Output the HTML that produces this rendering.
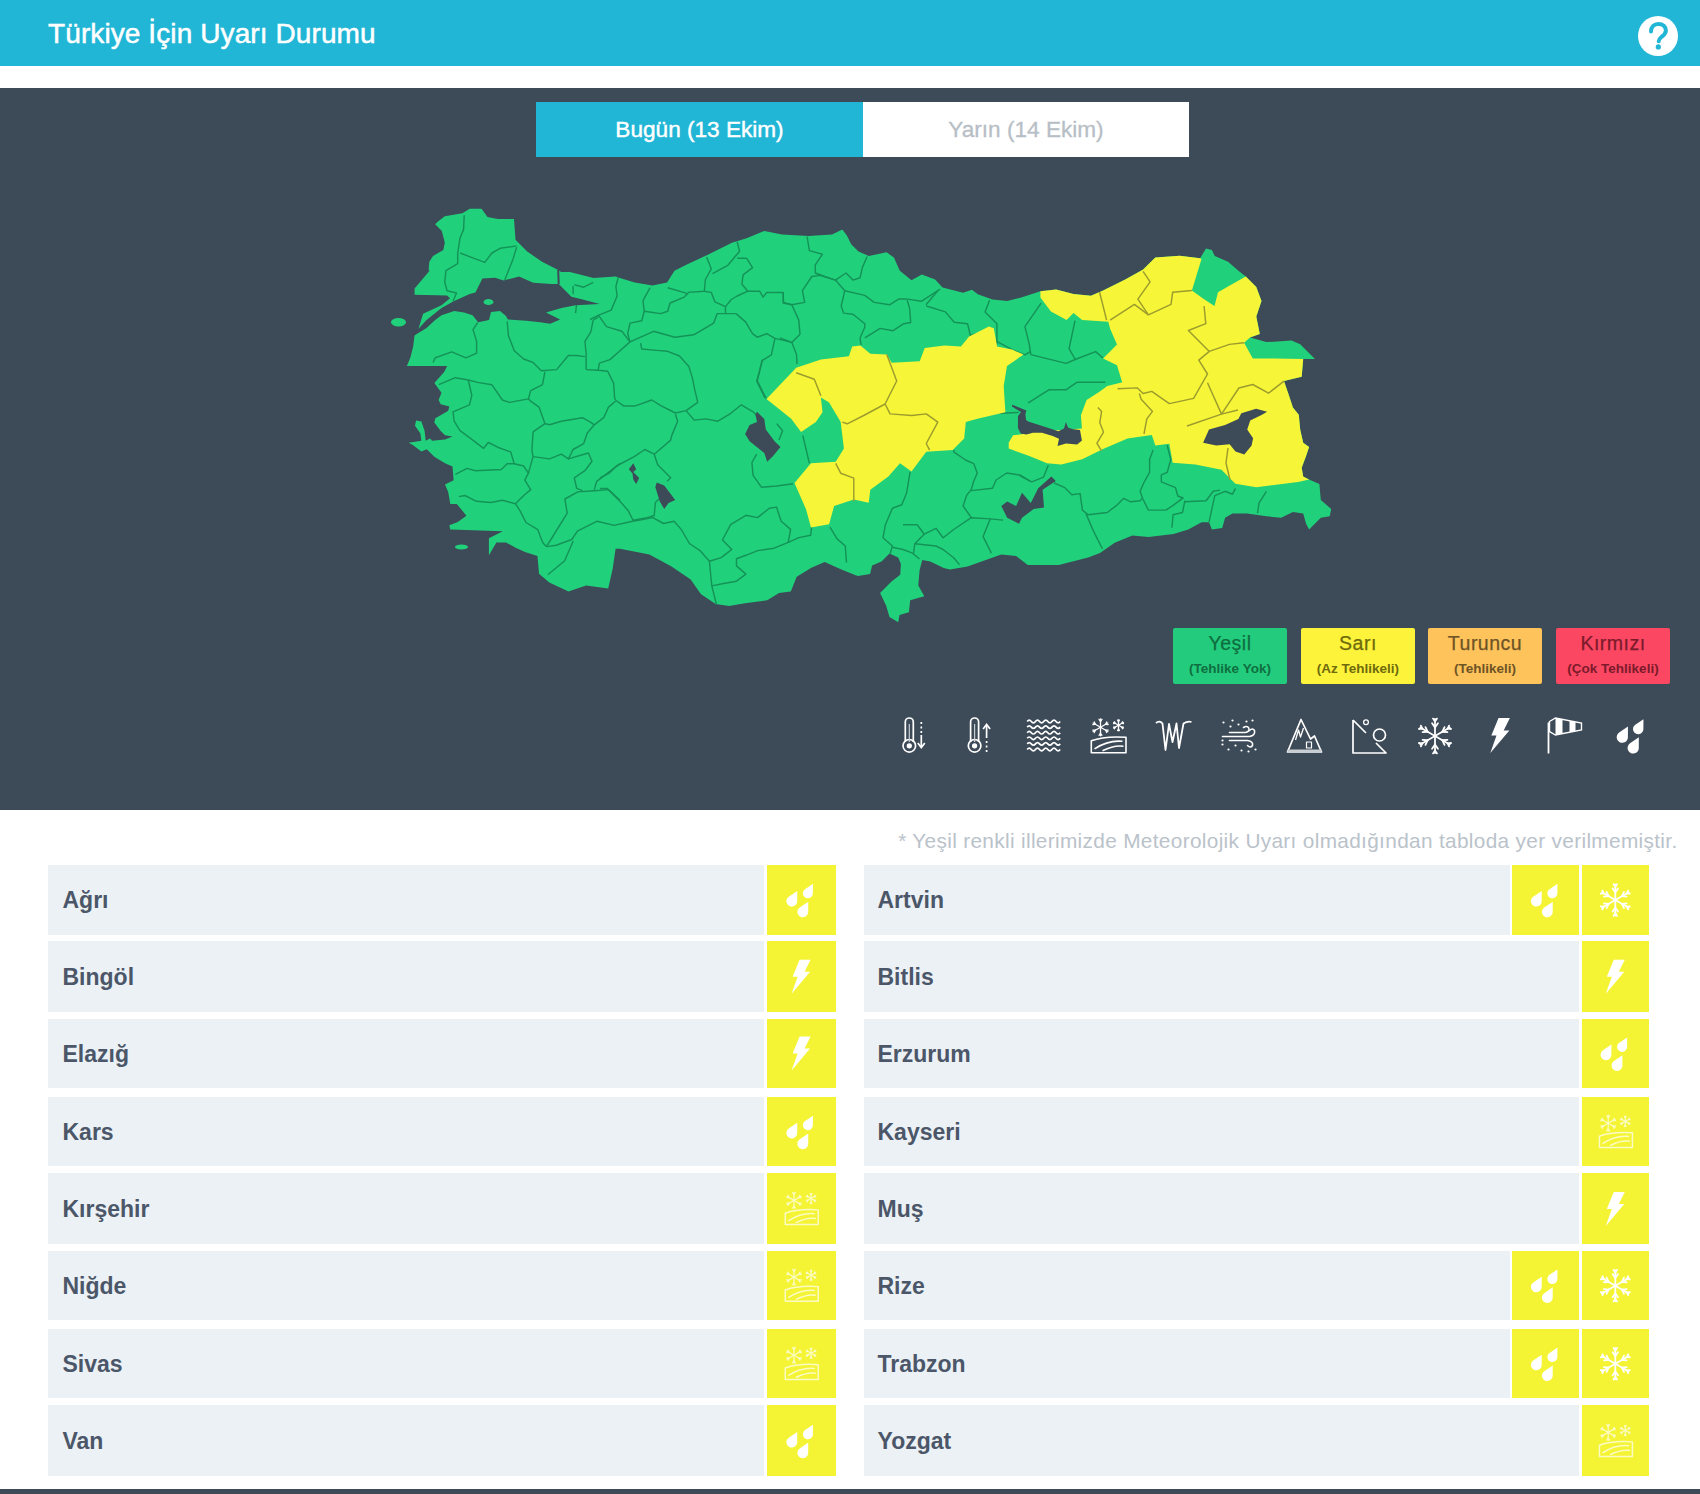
<!DOCTYPE html>
<html lang="tr">
<head>
<meta charset="utf-8">
<title>Türkiye İçin Uyarı Durumu</title>
<style>
html,body{margin:0;padding:0;}
body{width:1700px;height:1494px;position:relative;overflow:hidden;background:#fff;font-family:"Liberation Sans",sans-serif;}
.hdr{position:absolute;left:0;top:0;width:1700px;height:66.4px;background:#21b5d6;}
.hdr h1{position:absolute;left:48px;top:14px;margin:0;font-weight:normal;font-size:28px;line-height:40px;color:#fff;letter-spacing:0.1px;-webkit-text-stroke:0.5px #fff;}
.help{position:absolute;left:1638px;top:16px;width:40px;height:40px;border-radius:50%;background:#fff;}
.dark{position:absolute;left:0;top:88px;width:1700px;height:722px;background:#3d4a58;}
.tab{position:absolute;top:102px;height:55px;line-height:55px;text-align:center;font-size:22.6px;}
.tab1{left:536px;width:327px;background:#21b5d6;color:#fff;-webkit-text-stroke:0.45px #fff;}
.tab2{left:863px;width:326px;background:#fff;color:#b7bec6;-webkit-text-stroke:0.3px #b7bec6;}
.map{position:absolute;left:0;top:0;}
.leg{position:absolute;top:628px;width:114px;height:56px;border-radius:2px;text-align:center;}
.leg b{display:block;font-weight:normal;-webkit-text-stroke:0.25px currentColor;font-size:19.5px;line-height:20px;padding-top:5px;letter-spacing:0.5px;}
.leg i{display:block;font-style:normal;font-weight:bold;font-size:13.5px;line-height:16px;margin-top:7.5px;}
.ic{position:absolute;top:714px;width:44px;height:44px;}
.note{position:absolute;left:0;width:1677.5px;top:829px;text-align:right;font-size:20.8px;line-height:24px;color:#bac2ca;letter-spacing:0.33px;}
.row{position:absolute;background:#ebf1f5;}
.nm{position:absolute;font-weight:bold;font-size:23px;color:#4b5769;}
.yb{position:absolute;background:#f4f434;}
.foot{position:absolute;left:0;top:1489px;width:1700px;height:5px;background:#3d4a58;}
</style>
</head>
<body>
<div class="hdr"><h1>Türkiye İçin Uyarı Durumu</h1>
<div class="help"><svg width="40" height="40" viewBox="0 0 40 40"><path d="M13 15.6 C13 10.6 16.2 7.9 20.4 7.9 C24.8 7.9 27.9 10.6 27.9 14.6 C27.9 18 25.4 19.4 23.4 21 C21.6 22.5 20.7 23.6 20.7 25.2" fill="none" stroke="#21b5d6" stroke-width="4" stroke-linecap="round"/><circle cx="20.3" cy="30.9" r="2.6" fill="#21b5d6"/></svg></div>
</div>
<div class="dark"></div>
<div class="tab tab1">Bugün (13 Ekim)</div>
<div class="tab tab2">Yarın (14 Ekim)</div>
<svg class="map" width="1700" height="1494" viewBox="0 0 1700 1494" style="position:absolute;left:0;top:0">
<path d="M435.2 224.3 L437.4 222.1 L444.8 216.2 L462.4 213.3 L469.8 208.8 L481.6 208.8 L487.5 216.9 L497.8 219.1 L514.0 219.1 L515.5 239.8 L527.2 251.5 L542.0 261.8 L558.2 269.9 L561.1 272.1 L569.9 272.1 L593.5 278.0 L615.6 276.6 L620.0 278.0 L634.7 282.4 L652.4 285.4 L667.1 282.4 L674.5 270.7 L686.3 264.8 L708.3 254.5 L731.9 242.7 L746.6 238.3 L764.3 230.9 L782.0 234.6 L808.5 236.1 L832.0 234.6 L842.3 229.4 L846.7 235.3 L851.2 244.2 L858.5 251.5 L868.8 256.0 L886.5 252.3 L893.9 257.4 L899.8 270.7 L911.5 280.2 L921.8 274.4 L935.1 279.5 L942.5 287.6 L963.1 292.8 L971.9 289.8 L977.8 294.2 L992.5 299.4 L1007.2 300.9 L1022.0 297.2 L1040.4 291.3 L1056.1 289.6 L1073.5 294.0 L1090.9 295.7 L1103.1 290.5 L1125.7 279.2 L1143.1 269.6 L1155.3 257.4 L1179.7 255.7 L1200.1 258.2 L1206.0 248.6 L1211.9 250.1 L1214.8 256.0 L1228.1 261.8 L1238.4 270.7 L1245.8 276.6 L1256.3 287.0 L1261.5 300.9 L1256.3 316.6 L1259.8 334.0 L1250.0 337.5 L1266.4 342.1 L1291.4 340.6 L1300.2 344.3 L1315.0 359.0 L1303.2 359.0 L1301.7 376.7 L1284.0 381.1 L1289.4 396.7 L1292.9 407.4 L1298.8 414.7 L1300.2 429.4 L1303.2 442.7 L1309.1 447.1 L1306.1 456.0 L1301.7 467.7 L1303.2 476.6 L1309.1 479.5 L1319.4 483.9 L1320.8 500.1 L1331.2 509.0 L1329.7 516.3 L1320.8 517.8 L1309.1 529.6 L1306.1 523.7 L1303.2 513.4 L1292.9 511.9 L1281.1 517.8 L1266.4 516.3 L1247.2 513.4 L1232.5 513.4 L1225.1 517.8 L1222.2 528.1 L1211.9 529.6 L1209.0 522.2 L1201.6 522.2 L1188.3 529.6 L1173.6 534.0 L1148.6 536.9 L1132.4 535.5 L1114.7 542.8 L1100.0 553.1 L1088.2 557.5 L1058.8 564.9 L1027.8 564.9 L1016.1 556.1 L1001.3 554.6 L967.5 566.4 L950.0 569.5 L943.7 568.1 L930.3 561.4 L922.3 560.1 L919.6 570.1 L918.3 585.5 L924.3 596.2 L910.2 600.2 L908.9 612.3 L899.5 615.0 L898.2 622.3 L889.5 617.0 L886.1 605.6 L880.1 592.9 L891.5 581.5 L900.2 574.8 L900.9 564.1 L898.2 557.4 L889.5 553.4 L881.5 561.4 L872.1 565.4 L870.1 574.1 L858.0 576.1 L855.6 575.2 L840.8 569.3 L824.7 562.0 L811.4 567.8 L796.7 576.7 L790.8 591.4 L779.0 592.9 L767.2 600.2 L745.1 603.2 L729.0 606.1 L715.7 603.9 L701.0 594.3 L690.7 579.6 L671.5 566.4 L649.4 554.6 L620.0 548.7 L615.6 548.7 L612.6 569.3 L608.2 588.5 L586.1 585.5 L568.5 591.4 L549.3 582.6 L539.0 573.7 L537.5 556.1 L525.0 552.1 L515.7 547.8 L506.0 542.5 L496.4 542.5 L488.9 555.3 L488.9 538.2 L502.8 531.2 L450.3 529.6 L449.3 525.3 L457.8 522.1 L466.4 515.7 L456.8 503.9 L450.3 503.9 L448.2 492.1 L445.0 484.6 L453.6 480.3 L452.5 466.4 L445.0 463.2 L434.3 456.8 L426.8 449.3 L421.4 451.4 L412.8 445.0 L408.6 442.8 L421.4 440.7 L420.3 433.2 L415.0 425.7 L416.1 420.4 L421.4 421.4 L424.6 431.1 L425.7 440.7 L430.0 438.6 L432.1 440.7 L445.0 439.6 L452.5 436.4 L445.0 435.3 L440.7 431.1 L434.3 422.5 L435.3 418.2 L442.8 413.9 L448.2 410.7 L449.3 406.4 L440.7 404.3 L438.6 400.0 L441.5 392.8 L434.4 383.0 L444.3 371.7 L447.1 366.0 L406.9 366.0 L410.4 357.5 L413.2 346.2 L414.5 335.4 L418.5 328.7 L423.1 313.8 L441.5 305.3 L450.0 298.2 L447.1 295.4 L414.6 294.7 L414.6 288.4 L430.2 270.0 L428.6 270.7 L429.3 261.8 L433.0 255.9 L443.3 250.1 L444.8 242.7 L441.8 230.9 Z" fill="#21d07b"/>
<path d="M464.2 215.3 L463.6 229.4 L460.1 237.7 L457.7 253.0 L457.7 263.6 L445.9 270.7 L444.8 282.4 L447.1 290.7 L456.5 293.0 L453.0 301.3" fill="none" stroke="#149357" stroke-width="1.45" stroke-linejoin="round"/>
<path d="M460.1 253.0 L475.4 258.9 L484.8 262.4 L491.9 253.0 L500.1 248.3 L516.6 245.9" fill="none" stroke="#149357" stroke-width="1.45" stroke-linejoin="round"/>
<path d="M516.6 247.1 L513.1 258.9 L508.4 270.7 L504.8 280.1" fill="none" stroke="#149357" stroke-width="1.45" stroke-linejoin="round"/>
<path d="M574.3 284.8 L583.7 287.2 L593.2 282.4" fill="none" stroke="#149357" stroke-width="1.45" stroke-linejoin="round"/>
<path d="M573.1 286.0 L573.1 294.2" fill="none" stroke="#149357" stroke-width="1.45" stroke-linejoin="round"/>
<path d="M576.7 303.7 L575.5 313.1" fill="none" stroke="#149357" stroke-width="1.45" stroke-linejoin="round"/>
<path d="M477.7 322.5 L473.0 329.6 L476.6 341.3 L476.6 353.1 L466.0 357.8 L451.8 351.9 L435.3 357.8 L433.0 362.5" fill="none" stroke="#149357" stroke-width="1.45" stroke-linejoin="round"/>
<path d="M507.2 321.3 L508.4 335.5 L514.3 350.8 L523.7 359.0 L533.1 362.5 L541.3 370.8 L556.6 369.6 L568.4 355.5 L576.7 355.5 L584.9 356.6" fill="none" stroke="#149357" stroke-width="1.45" stroke-linejoin="round"/>
<path d="M593.2 320.1 L590.8 331.9 L584.9 341.3 L586.1 353.1 L586.1 369.6" fill="none" stroke="#149357" stroke-width="1.45" stroke-linejoin="round"/>
<path d="M618.3 277.1 L615.9 286.5 L617.1 296.0 L611.2 310.1 L599.4 314.8 L590.0 319.5" fill="none" stroke="#149357" stroke-width="1.45" stroke-linejoin="round"/>
<path d="M650.1 287.7 L643.0 300.7 L644.2 311.3 L641.8 320.7 L630.0 323.1 L627.7 333.7 L630.0 341.9" fill="none" stroke="#149357" stroke-width="1.45" stroke-linejoin="round"/>
<path d="M644.2 311.3 L660.7 313.6 L667.7 311.3 L670.1 303.0 L684.2 297.1 L687.8 293.6 L667.7 287.7" fill="none" stroke="#149357" stroke-width="1.45" stroke-linejoin="round"/>
<path d="M687.8 292.4 L704.3 291.2 L705.4 279.5 L711.3 268.9 L706.6 257.1" fill="none" stroke="#149357" stroke-width="1.45" stroke-linejoin="round"/>
<path d="M712.5 273.6 L727.8 265.3 L733.7 258.3 L739.6 251.2 L737.2 241.8" fill="none" stroke="#149357" stroke-width="1.45" stroke-linejoin="round"/>
<path d="M737.2 258.3 L746.7 258.3 L752.5 267.7 L743.1 274.8 L741.9 284.2 L747.8 291.2 L737.2 296.0 L731.3 299.5 L725.5 306.6" fill="none" stroke="#149357" stroke-width="1.45" stroke-linejoin="round"/>
<path d="M704.3 291.2 L711.3 292.4 L714.9 301.8 L725.5 306.6 L725.5 313.6" fill="none" stroke="#149357" stroke-width="1.45" stroke-linejoin="round"/>
<path d="M630.0 341.9 L653.6 331.3 L674.8 337.2 L693.7 334.8 L713.7 323.1 L717.2 313.6 L725.5 313.6 L736.0 313.6" fill="none" stroke="#149357" stroke-width="1.45" stroke-linejoin="round"/>
<path d="M736.0 313.6 L745.5 321.9 L752.5 333.7 L757.3 337.2 L766.7 333.7 L774.9 338.4 L790.0 341.9" fill="none" stroke="#149357" stroke-width="1.45" stroke-linejoin="round"/>
<path d="M747.8 291.2 L759.6 291.2 L763.1 297.1 L766.7 292.4 L783.2 292.4 L783.2 303.0 L791.8 304.8" fill="none" stroke="#149357" stroke-width="1.45" stroke-linejoin="round"/>
<path d="M774.9 338.4 L771.4 354.9 L762.0 360.7 L757.3 380.8 L764.3 394.9 L766.5 399.0" fill="none" stroke="#149357" stroke-width="1.45" stroke-linejoin="round"/>
<path d="M640.6 343.1 L641.8 349.0 L653.6 350.1 L667.7 351.3 L679.5 356.0 L688.9 366.6 L692.5 378.4 L694.8 390.2 L697.8 402.4" fill="none" stroke="#149357" stroke-width="1.45" stroke-linejoin="round"/>
<path d="M630.0 341.9 L619.4 351.3 L610.0 359.6 L599.4 363.1 L598.2 370.2 L607.7 371.3 L613.6 383.1 L614.7 398.4 L615.5 400.0" fill="none" stroke="#149357" stroke-width="1.45" stroke-linejoin="round"/>
<path d="M586.1 369.6 L598.2 370.2" fill="none" stroke="#149357" stroke-width="1.45" stroke-linejoin="round"/>
<path d="M598.2 314.8 L606.5 326.6 L621.8 331.3 L630.0 341.9" fill="none" stroke="#149357" stroke-width="1.45" stroke-linejoin="round"/>
<path d="M593.2 320.1 L598.2 317.2" fill="none" stroke="#149357" stroke-width="1.45" stroke-linejoin="round"/>
<path d="M807.1 236.5 L809.4 250.6 L822.4 254.2 L815.3 264.8 L815.3 273.0 L824.8 276.5 L835.4 280.1 L846.0 273.0 L853.0 280.1 L860.1 277.7 L862.5 267.1 L867.2 256.5" fill="none" stroke="#149357" stroke-width="1.45" stroke-linejoin="round"/>
<path d="M835.4 280.1 L844.8 290.7 L864.8 295.4 L874.2 302.4 L889.5 304.8 L899.0 298.9 L906.0 298.9 L921.3 301.3 L937.8 290.7 L940.2 289.0" fill="none" stroke="#149357" stroke-width="1.45" stroke-linejoin="round"/>
<path d="M783.2 292.4 L783.5 302.4 L791.8 304.8 L804.7 302.4 L802.4 290.7 L811.8 276.5 L820.0 275.4 L835.4 280.1" fill="none" stroke="#149357" stroke-width="1.45" stroke-linejoin="round"/>
<path d="M791.8 304.8 L798.8 320.1 L800.0 334.3 L791.8 342.5 L780.0 337.8" fill="none" stroke="#149357" stroke-width="1.45" stroke-linejoin="round"/>
<path d="M791.8 342.5 L796.5 354.3 L797.0 364.0" fill="none" stroke="#149357" stroke-width="1.45" stroke-linejoin="round"/>
<path d="M844.8 290.7 L841.2 306.0 L843.6 313.1 L853.0 314.2 L864.8 323.7 L864.8 327.2 L860.1 337.8 L861.0 345.0" fill="none" stroke="#149357" stroke-width="1.45" stroke-linejoin="round"/>
<path d="M864.8 337.8 L880.1 328.4 L893.1 330.7 L903.7 323.7 L910.7 322.5 L909.6 308.3 L907.2 300.1" fill="none" stroke="#149357" stroke-width="1.45" stroke-linejoin="round"/>
<path d="M926.3 306.0 L945.4 311.9 L954.2 322.2 L967.5 323.7 L970.4 335.5 L986.6 331.0 L989.6 328.1" fill="none" stroke="#149357" stroke-width="1.45" stroke-linejoin="round"/>
<path d="M937.8 290.7 L926.0 304.8" fill="none" stroke="#149357" stroke-width="1.45" stroke-linejoin="round"/>
<path d="M989.6 300.1 L985.1 311.9 L996.9 323.7 L996.9 344.3" fill="none" stroke="#149357" stroke-width="1.45" stroke-linejoin="round"/>
<path d="M1041.1 303.1 L1024.9 326.6 L1029.3 344.3 L1030.8 354.6" fill="none" stroke="#149357" stroke-width="1.45" stroke-linejoin="round"/>
<path d="M1030.8 354.6 L1066.1 363.4 L1076.4 359.0 L1095.6 351.6 L1103.0 358.0" fill="none" stroke="#149357" stroke-width="1.45" stroke-linejoin="round"/>
<path d="M1075.0 320.7 L1069.1 348.7 L1075.0 359.0" fill="none" stroke="#149357" stroke-width="1.45" stroke-linejoin="round"/>
<path d="M1028.2 402.9 L1048.9 389.8 L1065.9 389.8 L1077.2 382.2 L1105.4 382.2" fill="none" stroke="#149357" stroke-width="1.45" stroke-linejoin="round"/>
<path d="M1000.0 413.3 L1018.8 412.4" fill="none" stroke="#149357" stroke-width="1.45" stroke-linejoin="round"/>
<path d="M995.3 340.7 L1013.0 350.1 L1024.8 354.8 L1030.7 351.3" fill="none" stroke="#149357" stroke-width="1.45" stroke-linejoin="round"/>
<path d="M438.8 384.7 L455.3 377.7 L468.3 380.0 L477.7 382.4 L491.8 384.7 L502.4 400.0 L509.5 402.4 L528.4 398.9 L530.7 390.6 L542.5 384.7 L544.9 371.8" fill="none" stroke="#149357" stroke-width="1.45" stroke-linejoin="round"/>
<path d="M468.3 380.0 L471.8 395.3 L469.5 404.8 L453.0 411.8 L454.2 421.2 L460.0 430.7 L469.5 437.7 L483.6 448.3 L488.3 442.5 L497.7 447.2 L510.7 451.9 L514.2 463.7" fill="none" stroke="#149357" stroke-width="1.45" stroke-linejoin="round"/>
<path d="M528.4 398.9 L530.7 401.2 L539.0 407.1 L544.9 423.6 L549.6 424.8 L561.3 421.2 L582.5 417.7 L590.8 422.4 L594.3 424.8" fill="none" stroke="#149357" stroke-width="1.45" stroke-linejoin="round"/>
<path d="M533.1 431.8 L531.9 450.7 L533.1 456.6 L549.6 458.9 L561.3 454.2 L568.4 458.9 L573.1 449.5 L583.7 443.6 L587.3 433.0 L594.3 424.8 L603.7 417.7 L608.5 407.1 L615.5 401.2" fill="none" stroke="#149357" stroke-width="1.45" stroke-linejoin="round"/>
<path d="M544.9 423.6 L533.1 431.8" fill="none" stroke="#149357" stroke-width="1.45" stroke-linejoin="round"/>
<path d="M455.3 474.3 L467.1 468.4 L475.4 470.7 L501.3 469.5 L507.2 463.7 L514.2 463.7 L523.7 466.0 L528.4 473.1 L524.8 480.1 L530.7 489.6 L523.7 495.5 L515.4 503.7" fill="none" stroke="#149357" stroke-width="1.45" stroke-linejoin="round"/>
<path d="M458.9 496.6 L464.8 495.5 L476.5 501.3 L490.7 502.5 L502.4 500.2 L515.4 503.7" fill="none" stroke="#149357" stroke-width="1.45" stroke-linejoin="round"/>
<path d="M515.4 503.7 L520.1 510.8 L526.0 522.5 L537.8 529.6 L540.1 536.0 L543.0 543.0 L546.4 546.6" fill="none" stroke="#149357" stroke-width="1.45" stroke-linejoin="round"/>
<path d="M546.4 546.6 L553.1 536.0 L567.2 513.1 L564.9 499.0 L577.8 491.9 L594.3 490.7 L608.5 489.6 L620.0 500.2" fill="none" stroke="#149357" stroke-width="1.45" stroke-linejoin="round"/>
<path d="M528.4 473.1 L533.1 456.6" fill="none" stroke="#149357" stroke-width="1.45" stroke-linejoin="round"/>
<path d="M568.4 458.9 L588.4 453.0 L592.0 461.3 L584.9 470.7 L574.3 477.8 L576.7 488.4 L582.5 490.7" fill="none" stroke="#149357" stroke-width="1.45" stroke-linejoin="round"/>
<path d="M594.3 489.6 L596.7 481.3 L610.8 470.7 L620.0 463.7" fill="none" stroke="#149357" stroke-width="1.45" stroke-linejoin="round"/>
<path d="M546.4 546.6 L556.2 545.2 L571.8 539.5 L577.4 531.1 L597.2 521.2 L614.1 525.4 L632.5 521.2 L640.0 520.0" fill="none" stroke="#149357" stroke-width="1.45" stroke-linejoin="round"/>
<path d="M573.2 541.0 L564.7 560.7 L547.8 574.8" fill="none" stroke="#149357" stroke-width="1.45" stroke-linejoin="round"/>
<path d="M615.3 400.0 L623.6 405.9 L635.3 405.9 L651.8 400.0 L661.2 405.9 L675.4 413.0 L686.0 410.6 L697.8 402.4" fill="none" stroke="#149357" stroke-width="1.45" stroke-linejoin="round"/>
<path d="M675.4 414.2 L677.7 421.2 L671.8 435.4 L670.7 440.1 L654.2 454.2" fill="none" stroke="#149357" stroke-width="1.45" stroke-linejoin="round"/>
<path d="M686.0 410.6 L694.2 420.1 L706.0 418.9 L717.8 421.2 L729.6 414.2 L741.3 404.8 L753.1 411.8 L756.7 415.4" fill="none" stroke="#149357" stroke-width="1.45" stroke-linejoin="round"/>
<path d="M762.5 360.0 L756.7 381.2 L764.9 397.7" fill="none" stroke="#149357" stroke-width="1.45" stroke-linejoin="round"/>
<path d="M756.7 454.2 L751.9 462.5 L753.1 475.4 L761.4 487.2 L776.7 486.0 L793.2 483.7" fill="none" stroke="#149357" stroke-width="1.45" stroke-linejoin="round"/>
<path d="M776.7 423.6 L782.6 430.7 L779.0 440.1" fill="none" stroke="#149357" stroke-width="1.45" stroke-linejoin="round"/>
<path d="M654.2 454.2 L644.8 449.5 L634.2 456.6 L616.5 466.0 L609.4 473.1 L600.0 477.8" fill="none" stroke="#149357" stroke-width="1.45" stroke-linejoin="round"/>
<path d="M654.2 454.2 L657.7 464.8 L670.7 477.8 L667.1 481.3" fill="none" stroke="#149357" stroke-width="1.45" stroke-linejoin="round"/>
<path d="M600.0 488.4 L607.1 488.4 L620.0 501.3 L628.3 510.8 L633.0 520.2 L647.1 517.8 L654.2 515.5 L655.4 502.5 L658.9 499.0" fill="none" stroke="#149357" stroke-width="1.45" stroke-linejoin="round"/>
<path d="M802.8 435.3 L809.4 463.3" fill="none" stroke="#149357" stroke-width="1.45" stroke-linejoin="round"/>
<path d="M640.0 520.0 L652.9 517.6 L663.5 523.5 L674.1 521.2 L681.2 529.4 L689.4 543.5 L700.0 550.6 L709.4 561.2 L711.8 585.9 L716.5 604.7" fill="none" stroke="#149357" stroke-width="1.45" stroke-linejoin="round"/>
<path d="M709.4 561.2 L721.2 557.6 L731.8 549.4 L722.4 540.0 L730.6 524.7 L745.9 515.3 L757.6 517.6 L769.4 508.2 L776.5 507.1 L781.2 521.2 L790.6 529.4 L788.2 542.4 L774.1 548.2 L757.6 550.6 L745.9 555.3 L736.5 558.8 L736.5 565.9 L745.9 574.1 L736.5 581.2 L723.5 583.5 L711.8 585.9" fill="none" stroke="#149357" stroke-width="1.45" stroke-linejoin="round"/>
<path d="M788.2 542.4 L798.8 537.6 L810.6 535.3 L811.8 525.9" fill="none" stroke="#149357" stroke-width="1.45" stroke-linejoin="round"/>
<path d="M830.0 527.2 L837.1 538.9 L845.3 546.0 L846.5 562.5" fill="none" stroke="#149357" stroke-width="1.45" stroke-linejoin="round"/>
<path d="M910.1 471.8 L906.6 493.0 L901.8 504.8 L892.4 508.3 L885.4 524.8 L883.0 537.8 L892.4 546.0 L890.1 554.3" fill="none" stroke="#149357" stroke-width="1.45" stroke-linejoin="round"/>
<path d="M892.4 547.2 L903.0 549.5 L912.5 553.1 L919.5 559.0" fill="none" stroke="#149357" stroke-width="1.45" stroke-linejoin="round"/>
<path d="M903.0 524.8 L917.2 524.8 L924.2 534.2 L914.8 543.7 L913.6 553.1" fill="none" stroke="#149357" stroke-width="1.45" stroke-linejoin="round"/>
<path d="M924.2 534.2 L936.0 528.3 L943.1 537.8 L953.7 529.5 L971.3 517.7 L990.2 518.9 L1003.1 520.1" fill="none" stroke="#149357" stroke-width="1.45" stroke-linejoin="round"/>
<path d="M914.8 543.7 L936.0 546.0 L943.1 549.5 L953.7 557.8 L959.6 564.9" fill="none" stroke="#149357" stroke-width="1.45" stroke-linejoin="round"/>
<path d="M971.3 517.7 L963.1 506.0 L966.6 495.4 L971.3 489.5 L973.7 481.2 L977.2 473.0 L973.7 463.6 L965.5 460.0 L953.7 451.8 L954.0 450.0" fill="none" stroke="#149357" stroke-width="1.45" stroke-linejoin="round"/>
<path d="M971.3 490.6 L992.5 488.3 L996.1 480.0 L1006.7 473.0 L1020.8 475.3 L1030.0 481.2" fill="none" stroke="#149357" stroke-width="1.45" stroke-linejoin="round"/>
<path d="M990.2 518.9 L983.1 536.6 L991.4 553.1" fill="none" stroke="#149357" stroke-width="1.45" stroke-linejoin="round"/>
<path d="M1020.0 475.9 L1031.8 481.8 L1043.6 477.1 L1048.3 465.3" fill="none" stroke="#149357" stroke-width="1.45" stroke-linejoin="round"/>
<path d="M1054.2 483.0 L1064.8 487.7 L1071.8 494.8 L1080.1 493.6 L1082.4 510.1 L1088.3 514.8 L1107.2 512.5 L1116.6 505.4 L1123.7 498.3 L1130.7 501.8 L1140.1 500.7 L1142.5 498.3" fill="none" stroke="#149357" stroke-width="1.45" stroke-linejoin="round"/>
<path d="M1086.0 513.6 L1093.0 530.1 L1098.9 541.9 L1102.5 549.0" fill="none" stroke="#149357" stroke-width="1.45" stroke-linejoin="round"/>
<path d="M1142.5 498.3 L1148.4 510.1 L1166.0 510.1 L1173.1 505.4 L1182.5 498.3" fill="none" stroke="#149357" stroke-width="1.45" stroke-linejoin="round"/>
<path d="M1153.1 450.0 L1149.6 459.4 L1149.6 472.4 L1143.7 483.0 L1140.1 491.2 L1142.5 498.3" fill="none" stroke="#149357" stroke-width="1.45" stroke-linejoin="round"/>
<path d="M1167.2 445.3 L1170.8 459.4 L1167.2 472.4 L1161.3 474.8 L1161.3 481.8 L1175.5 487.7 L1177.8 496.0 L1183.7 498.3" fill="none" stroke="#149357" stroke-width="1.45" stroke-linejoin="round"/>
<path d="M1184.9 500.7 L1182.5 512.5 L1173.1 514.8 L1171.9 527.8" fill="none" stroke="#149357" stroke-width="1.45" stroke-linejoin="round"/>
<path d="M1184.9 501.8 L1206.1 500.7 L1213.2 491.2 L1220.0 490.1" fill="none" stroke="#149357" stroke-width="1.45" stroke-linejoin="round"/>
<path d="M1266.4 491.3 L1259.0 503.1 L1257.5 513.4" fill="none" stroke="#149357" stroke-width="1.45" stroke-linejoin="round"/>
<path d="M1209.0 522.2 L1214.8 495.7 L1225.1 491.3 L1232.5 494.2 L1235.5 488.3" fill="none" stroke="#149357" stroke-width="1.45" stroke-linejoin="round"/>
<path d="M766.5 399.1 L796.2 367.8 L820.9 359.5 L848.9 356.2 L852.2 346.4 L860.4 345.5 L870.3 353.8 L886.8 354.6 L891.7 362.8 L919.7 361.2 L924.7 348.0 L944.4 345.5 L960.9 346.4 L969.1 336.5 L988.9 326.6 L993.8 328.2 L997.1 346.4 L1012.0 349.6 L1023.5 354.6 L1007.0 366.1 L1003.7 385.9 L1005.4 412.2 L977.4 418.8 L965.8 422.1 L964.2 438.6 L952.7 450.1 L926.3 451.8 L911.5 471.5 L900.0 463.3 L888.4 476.5 L870.3 489.7 L868.7 502.8 L853.8 499.5 L834.1 506.1 L829.1 524.2 L811.0 527.5 L806.1 509.4 L794.5 483.1 L811.0 463.3 L835.7 461.7 L843.9 448.5 L840.7 422.1 L829.1 402.4 L820.9 397.4 L822.5 412.2 L815.9 422.1 L801.1 432.0 L791.2 418.8 Z" fill="#f6f537"/>
<path d="M1040.4 291.3 L1056.1 289.6 L1073.5 294.0 L1090.9 295.7 L1103.1 290.5 L1125.7 279.2 L1143.1 269.6 L1155.3 257.4 L1179.7 255.7 L1200.1 258.2 L1201.5 259.0 L1191.9 290.5 L1204.1 299.2 L1214.5 306.1 L1218.0 292.2 L1230.2 285.3 L1245.8 276.6 L1256.3 287.0 L1261.5 300.9 L1256.3 316.6 L1259.8 334.0 L1250.0 337.5 L1244.1 342.7 L1252.8 358.4 L1273.7 358.4 L1303.2 359.0 L1301.7 376.7 L1284.0 381.1 L1289.4 396.7 L1292.9 407.4 L1298.8 414.7 L1300.2 429.4 L1303.2 442.7 L1309.1 447.1 L1306.1 456.0 L1301.7 467.7 L1303.2 476.6 L1309.1 479.5 L1298.1 481.9 L1256.3 487.2 L1235.4 483.7 L1221.5 469.8 L1195.4 464.5 L1172.7 462.8 L1169.3 443.7 L1155.3 445.4 L1151.8 435.0 L1127.5 438.4 L1103.1 448.9 L1082.2 459.3 L1061.3 464.5 L1047.0 463.3 L1029.3 456.0 L1008.7 448.6 L1008.7 442.7 L1013.1 435.3 L1023.4 433.9 L1024.5 431.2 L1045.0 430.5 L1062.0 430.0 L1081.9 428.4 L1080.9 415.2 L1086.6 400.1 L1099.8 391.6 L1107.3 386.0 L1122.4 382.2 L1122.3 382.7 L1117.0 365.3 L1103.1 358.4 L1117.0 344.4 L1110.1 328.8 L1108.3 321.8 L1082.2 320.1 L1073.5 313.1 L1066.6 320.1 L1050.9 311.4 L1040.4 297.4 Z" fill="#f6f537"/>
<path d="M796.2 372.7 L814.3 379.3 L820.9 395.8" fill="none" stroke="#9c9c2e" stroke-width="1.45" stroke-linejoin="round"/>
<path d="M886.8 354.6 L896.7 381.0 L885.1 404.0 L863.7 415.5 L847.2 423.8 L842.3 422.1" fill="none" stroke="#9c9c2e" stroke-width="1.45" stroke-linejoin="round"/>
<path d="M885.1 404.0 L890.1 413.9 L911.5 415.5 L926.3 413.9 L937.8 422.1 L926.3 443.5 L929.6 450.1" fill="none" stroke="#9c9c2e" stroke-width="1.45" stroke-linejoin="round"/>
<path d="M835.7 463.3 L840.7 473.2 L853.8 478.1 L853.8 501.2" fill="none" stroke="#9c9c2e" stroke-width="1.45" stroke-linejoin="round"/>
<path d="M1099.6 292.2 L1106.6 320.1" fill="none" stroke="#9c9c2e" stroke-width="1.45" stroke-linejoin="round"/>
<path d="M1143.1 271.3 L1150.1 281.8 L1137.9 299.2 L1148.4 314.8" fill="none" stroke="#9c9c2e" stroke-width="1.45" stroke-linejoin="round"/>
<path d="M1110.1 320.1 L1134.4 304.4 L1148.4 314.8 L1171.0 304.4 L1172.7 292.2 L1191.9 290.5" fill="none" stroke="#9c9c2e" stroke-width="1.45" stroke-linejoin="round"/>
<path d="M1204.1 306.1 L1205.8 323.6 L1188.4 330.5 L1209.3 351.4 L1229.4 344.4 L1244.1 342.7" fill="none" stroke="#9c9c2e" stroke-width="1.45" stroke-linejoin="round"/>
<path d="M1209.3 351.4 L1198.8 360.1 L1207.5 374.0 L1193.6 398.4 L1169.3 403.6 L1151.8 391.4 L1143.1 393.5 L1137.4 387.9 L1117.6 388.8" fill="none" stroke="#9c9c2e" stroke-width="1.45" stroke-linejoin="round"/>
<path d="M1207.5 382.7 L1221.5 414.1 L1238.9 388.0 L1252.8 384.5 L1268.5 393.2 L1284.0 381.1" fill="none" stroke="#9c9c2e" stroke-width="1.45" stroke-linejoin="round"/>
<path d="M1139.3 393.5 L1141.2 399.2 L1152.5 411.4 L1146.8 418.9 L1144.0 434.0" fill="none" stroke="#9c9c2e" stroke-width="1.45" stroke-linejoin="round"/>
<path d="M1187.0 426.0 L1221.5 414.1 L1238.0 410.0" fill="none" stroke="#9c9c2e" stroke-width="1.45" stroke-linejoin="round"/>
<path d="M1228.0 448.0 L1226.0 463.0 L1230.0 480.0" fill="none" stroke="#9c9c2e" stroke-width="1.45" stroke-linejoin="round"/>
<path d="M1097.9 407.6 L1101.6 411.4 L1099.8 422.7 L1103.5 432.1 L1096.9 443.4 L1101.6 450.9" fill="none" stroke="#9c9c2e" stroke-width="1.45" stroke-linejoin="round"/>
<path d="M413.5 336.0 L426.5 328.0 L435.2 320.0 L441.5 315.2 L454.2 311.0 L464.1 312.4 L472.5 315.2 L478.2 322.2 L489.0 320.0 L491.0 312.0 L500.0 311.0 L506.0 316.0 L507.8 319.4 L526.2 320.8 L540.3 322.2 L550.2 323.7 L560.1 319.4 L546.0 312.4 L561.5 308.1 L575.6 305.3 L599.6 303.9 L582.7 299.6 L571.4 296.8 L558.7 284.1 L551.6 284.1 L533.2 282.7 L519.1 276.4 L503.6 280.6 L495.1 277.8 L482.4 278.5 L475.4 292.6 L469.7 294.0 L454.2 301.1 L441.5 308.1 L426.5 320.0 L418.5 328.7 L412.5 334.0 Z" fill="#3d4a58"/>
<path d="M558.2 269.9 L558.7 284.1" stroke="#3d4a58" stroke-width="2" fill="none"/>
<path d="M1241.3 413.3 L1256.1 408.8 L1267.1 411.8 L1262.0 414.7 L1250.2 420.6 L1247.2 429.4 L1253.1 438.3 L1251.6 445.6 L1244.3 454.5 L1235.5 451.5 L1229.6 444.2 L1216.3 445.6 L1203.1 442.7 L1209.0 429.4 L1225.1 425.0 L1238.4 419.1 Z" fill="#3d4a58"/>
<path d="M757.0 411.8 L764.3 419.1 L765.8 429.4 L774.6 441.2 L780.5 447.1 L773.1 456.0 L767.2 461.8 L764.3 453.0 L749.6 441.2 L745.1 433.9 L749.6 425.0 L757.0 422.1 L755.5 414.7 Z" fill="#3d4a58"/>
<path d="M656.8 482.4 L664.2 485.4 L668.6 491.3 L675.2 500.1 L668.6 503.1 L664.2 509.0 L659.8 501.6 L655.3 486.9 Z" fill="#3d4a58"/>
<path d="M633.3 463.3 L636.2 469.2 L633.3 472.1 L639.1 478.0 L636.2 483.9 L633.3 479.5 L632.5 473.6 L628.8 469.2 Z" fill="#3d4a58"/>
<path d="M1001.3 506.0 L1007.2 501.6 L1016.1 506.0 L1022.0 492.8 L1030.8 503.1 L1038.2 488.3 L1051.4 476.6 L1055.8 481.0 L1042.6 489.8 L1044.0 507.5 L1033.7 509.0 L1022.0 517.8 L1019.0 523.7 L1007.2 517.8 Z" fill="#3d4a58"/>
<path d="M1012.2 404.8 L1026.4 410.4 L1025.4 414.0 L1026.0 420.0 L1028.2 421.5 L1037.6 424.6 L1047.0 427.4 L1058.4 431.2 L1064.0 428.5 L1065.9 422.0 L1068.0 427.4 L1072.0 429.0 L1080.0 430.0 L1081.9 440.6 L1077.2 444.4 L1066.0 443.5 L1057.5 446.0 L1059.0 438.7 L1052.7 435.9 L1042.0 432.8 L1032.9 432.8 L1026.4 434.5 L1020.7 433.5 L1017.9 428.0 L1018.0 416.0 L1021.0 412.0 L1012.0 406.5 Z" fill="#3d4a58"/>
<ellipse cx="398.5" cy="322.2" rx="7.5" ry="4.2" fill="#21d07b"/>
<ellipse cx="488.5" cy="302.0" rx="5.0" ry="3.0" fill="#21d07b"/>
<ellipse cx="461.5" cy="547.0" rx="6.5" ry="2.4" fill="#21d07b"/>
</svg>
<div class="leg" style="left:1173px;background:#22cc7c;color:#0f6e40;"><b>Yeşil</b><i>(Tehlike Yok)</i></div>
<div class="leg" style="left:1301px;background:#fdf33a;color:#6f6a0c;"><b>Sarı</b><i>(Az Tehlikeli)</i></div>
<div class="leg" style="left:1428px;background:#fec35a;color:#6e5326;"><b>Turuncu</b><i>(Tehlikeli)</i></div>
<div class="leg" style="left:1556px;background:#fb4762;color:#7c1a2b;"><b>Kırmızı</b><i>(Çok Tehlikeli)</i></div>
<svg width="1700" height="1494" style="position:absolute;left:0;top:0">
<g fill="none" stroke="#ffffff" stroke-width="1.7"><path d="M905.3 742 L905.3 722 A4 4 0 0 1 913.3 722 L913.3 742"/><circle cx="909.3" cy="745.8" r="6.3"/><circle cx="909.3" cy="745.8" r="1.8" fill="#ffffff"/><line x1="909.3" y1="724" x2="909.3" y2="742" stroke-width="1.2" stroke="#c9ced3"/><line x1="921.3" y1="722" x2="921.3" y2="733" stroke-dasharray="2 2.5"/><line x1="921.3" y1="735" x2="921.3" y2="746"/><path d="M917.8 743 L921.3 747.5 L924.8 743" /></g>
<g fill="none" stroke="#ffffff" stroke-width="1.7"><path d="M970.6 742 L970.6 722 A4 4 0 0 1 978.6 722 L978.6 742"/><circle cx="974.6" cy="745.8" r="6.3"/><circle cx="974.6" cy="745.8" r="1.8" fill="#ffffff"/><line x1="974.6" y1="724" x2="974.6" y2="742" stroke-width="1.2" stroke="#c9ced3"/><line x1="986.6" y1="726" x2="986.6" y2="738"/><path d="M983.1 729 L986.6 724.5 L990.1 729" /><line x1="986.6" y1="741" x2="986.6" y2="752" stroke-dasharray="2 2.5"/></g>
<g fill="none" stroke="#ffffff" stroke-width="1.7"><path d="M1027.2 721.5 Q1029.26 718.9 1031.32 721.5 Q1033.39 724.1 1035.45 721.5 Q1037.51 718.9 1039.57 721.5 Q1041.64 724.1 1043.7 721.5 Q1045.76 718.9 1047.82 721.5 Q1049.89 724.1 1051.95 721.5 Q1054.01 718.9 1056.07 721.5 Q1058.14 724.1 1060.2 721.5"/><path d="M1027.2 727.1 Q1029.26 724.5 1031.32 727.1 Q1033.39 729.7 1035.45 727.1 Q1037.51 724.5 1039.57 727.1 Q1041.64 729.7 1043.7 727.1 Q1045.76 724.5 1047.82 727.1 Q1049.89 729.7 1051.95 727.1 Q1054.01 724.5 1056.07 727.1 Q1058.14 729.7 1060.2 727.1"/><path d="M1027.2 732.7 Q1029.26 730.1 1031.32 732.7 Q1033.39 735.3000000000001 1035.45 732.7 Q1037.51 730.1 1039.57 732.7 Q1041.64 735.3000000000001 1043.7 732.7 Q1045.76 730.1 1047.82 732.7 Q1049.89 735.3000000000001 1051.95 732.7 Q1054.01 730.1 1056.07 732.7 Q1058.14 735.3000000000001 1060.2 732.7"/><path d="M1027.2 738.3 Q1029.26 735.6999999999999 1031.32 738.3 Q1033.39 740.9 1035.45 738.3 Q1037.51 735.6999999999999 1039.57 738.3 Q1041.64 740.9 1043.7 738.3 Q1045.76 735.6999999999999 1047.82 738.3 Q1049.89 740.9 1051.95 738.3 Q1054.01 735.6999999999999 1056.07 738.3 Q1058.14 740.9 1060.2 738.3"/><path d="M1027.2 743.9 Q1029.26 741.3 1031.32 743.9 Q1033.39 746.5 1035.45 743.9 Q1037.51 741.3 1039.57 743.9 Q1041.64 746.5 1043.7 743.9 Q1045.76 741.3 1047.82 743.9 Q1049.89 746.5 1051.95 743.9 Q1054.01 741.3 1056.07 743.9 Q1058.14 746.5 1060.2 743.9"/><path d="M1027.2 749.5 Q1029.26 746.9 1031.32 749.5 Q1033.39 752.1 1035.45 749.5 Q1037.51 746.9 1039.57 749.5 Q1041.64 752.1 1043.7 749.5 Q1045.76 746.9 1047.82 749.5 Q1049.89 752.1 1051.95 749.5 Q1054.01 746.9 1056.07 749.5 Q1058.14 752.1 1060.2 749.5"/></g>
<g stroke="#ffffff" stroke-width="1.3" stroke-linecap="round"><line x1="1100.50" y1="727.30" x2="1100.50" y2="718.80"/><line x1="1100.50" y1="721.35" x2="1099.04" y2="719.26"/><line x1="1100.50" y1="721.35" x2="1101.96" y2="719.26"/><line x1="1100.50" y1="727.30" x2="1093.14" y2="723.05"/><line x1="1095.35" y1="724.32" x2="1092.81" y2="724.55"/><line x1="1095.35" y1="724.32" x2="1094.27" y2="722.01"/><line x1="1100.50" y1="727.30" x2="1093.14" y2="731.55"/><line x1="1095.35" y1="730.27" x2="1094.27" y2="732.59"/><line x1="1095.35" y1="730.27" x2="1092.81" y2="730.05"/><line x1="1100.50" y1="727.30" x2="1100.50" y2="735.80"/><line x1="1100.50" y1="733.25" x2="1101.96" y2="735.34"/><line x1="1100.50" y1="733.25" x2="1099.04" y2="735.34"/><line x1="1100.50" y1="727.30" x2="1107.86" y2="731.55"/><line x1="1105.65" y1="730.27" x2="1108.19" y2="730.05"/><line x1="1105.65" y1="730.27" x2="1106.73" y2="732.59"/><line x1="1100.50" y1="727.30" x2="1107.86" y2="723.05"/><line x1="1105.65" y1="724.32" x2="1106.73" y2="722.01"/><line x1="1105.65" y1="724.32" x2="1108.19" y2="724.55"/></g><g stroke="#ffffff" stroke-width="1.3" stroke-linecap="round"><line x1="1118.50" y1="725.30" x2="1118.50" y2="719.80"/><line x1="1118.50" y1="721.45" x2="1117.55" y2="720.10"/><line x1="1118.50" y1="721.45" x2="1119.45" y2="720.10"/><line x1="1118.50" y1="725.30" x2="1113.74" y2="722.55"/><line x1="1115.17" y1="723.38" x2="1113.52" y2="723.52"/><line x1="1115.17" y1="723.38" x2="1114.47" y2="721.88"/><line x1="1118.50" y1="725.30" x2="1113.74" y2="728.05"/><line x1="1115.17" y1="727.22" x2="1114.47" y2="728.72"/><line x1="1115.17" y1="727.22" x2="1113.52" y2="727.08"/><line x1="1118.50" y1="725.30" x2="1118.50" y2="730.80"/><line x1="1118.50" y1="729.15" x2="1119.45" y2="730.50"/><line x1="1118.50" y1="729.15" x2="1117.55" y2="730.50"/><line x1="1118.50" y1="725.30" x2="1123.26" y2="728.05"/><line x1="1121.83" y1="727.22" x2="1123.48" y2="727.08"/><line x1="1121.83" y1="727.22" x2="1122.53" y2="728.72"/><line x1="1118.50" y1="725.30" x2="1123.26" y2="722.55"/><line x1="1121.83" y1="723.38" x2="1122.53" y2="721.88"/><line x1="1121.83" y1="723.38" x2="1123.48" y2="723.52"/></g><g fill="none" stroke="#ffffff" stroke-width="1.6" stroke-linejoin="round"><path d="M1091.3 740.8 Q1104.5 735.8 1126.0 737.3 L1126.0 752.8 L1091.3 752.8 Z"/><path d="M1094.5 748.8 Q1108.5 739.8 1122.5 741.3"/><path d="M1102.5 750.8 Q1114.5 744.8 1123.5 746.3"/></g>
<path d="M1156.0 723 Q1159.5 720 1162.5 723.5 L1165.5 750 L1169.0 724 L1172.5 742 L1176.5 723.5 L1179.0 748 L1183.5 723.5 Q1187.5 721 1191.5 722" fill="none" stroke="#ffffff" stroke-width="1.8" stroke-linejoin="round"/>
<g fill="none" stroke="#ffffff" stroke-width="1.6" stroke-linecap="round"><path d="M1222.5 736.5 L1249.5 736.5 Q1255.5 735.5 1254.5 730.5 Q1252.5 727.5 1249.5 730.5"/><path d="M1229.5 732.5 L1245.5 732.5 Q1250.5 731.5 1248.5 727.5 Q1246.5 725.5 1243.5 727.5"/><path d="M1229.5 740.5 L1247.5 740.5 Q1253.5 741.5 1252.5 745.5 Q1250.5 748.5 1247.5 745.5"/></g><circle cx="1223.5" cy="722.5" r="1.1" fill="#ffffff"/><circle cx="1232.5" cy="720.5" r="1.1" fill="#ffffff"/><circle cx="1238.5" cy="724.5" r="1.1" fill="#ffffff"/><circle cx="1246.5" cy="721.5" r="1.1" fill="#ffffff"/><circle cx="1252.5" cy="720.5" r="1.1" fill="#ffffff"/><circle cx="1230.5" cy="726.5" r="1.1" fill="#ffffff"/><circle cx="1222.5" cy="744.5" r="1.1" fill="#ffffff"/><circle cx="1228.5" cy="749.5" r="1.1" fill="#ffffff"/><circle cx="1235.5" cy="745.5" r="1.1" fill="#ffffff"/><circle cx="1241.5" cy="750.5" r="1.1" fill="#ffffff"/><circle cx="1248.5" cy="751.5" r="1.1" fill="#ffffff"/><circle cx="1255.5" cy="749.5" r="1.1" fill="#ffffff"/><circle cx="1222.5" cy="740.5" r="1.1" fill="#ffffff"/>
<g fill="none" stroke="#ffffff" stroke-width="1.7" stroke-linejoin="round"><path d="M1287.5 752 L1301.0 719.5 L1310.5 739 L1314.5 736 L1321.5 752 Z"/><path d="M1295.5 740 L1298.5 730 L1300.5 737 L1303.5 728" stroke-width="1.3"/><rect x="1306.5" y="742" width="5" height="6" stroke-width="1.2"/></g><rect x="1287.5" y="749.5" width="34" height="3.5" fill="#c9ced3"/>
<g fill="none" stroke="#ffffff" stroke-width="1.7" stroke-linejoin="round"><path d="M1353 720 L1353 753 L1386 753 L1376 743 M1353 720 L1366 733"/><circle cx="1379.5" cy="735" r="6"/><circle cx="1366" cy="722.2" r="2.4" stroke-width="1.3"/></g>
<g stroke="#ffffff" stroke-width="1.8" stroke-linecap="round"><line x1="1435.00" y1="736.00" x2="1435.00" y2="719.00"/><line x1="1435.00" y1="727.50" x2="1432.07" y2="723.32"/><line x1="1435.00" y1="727.50" x2="1437.93" y2="723.32"/><line x1="1435.00" y1="721.38" x2="1433.05" y2="718.59"/><line x1="1435.00" y1="721.38" x2="1436.95" y2="718.59"/><line x1="1435.00" y1="736.00" x2="1420.28" y2="727.50"/><line x1="1427.64" y1="731.75" x2="1422.56" y2="732.19"/><line x1="1427.64" y1="731.75" x2="1425.48" y2="727.13"/><line x1="1422.34" y1="728.69" x2="1418.95" y2="728.99"/><line x1="1422.34" y1="728.69" x2="1420.90" y2="725.61"/><line x1="1435.00" y1="736.00" x2="1420.28" y2="744.50"/><line x1="1427.64" y1="740.25" x2="1425.48" y2="744.87"/><line x1="1427.64" y1="740.25" x2="1422.56" y2="739.81"/><line x1="1422.34" y1="743.31" x2="1420.90" y2="746.39"/><line x1="1422.34" y1="743.31" x2="1418.95" y2="743.01"/><line x1="1435.00" y1="736.00" x2="1435.00" y2="753.00"/><line x1="1435.00" y1="744.50" x2="1437.93" y2="748.68"/><line x1="1435.00" y1="744.50" x2="1432.07" y2="748.68"/><line x1="1435.00" y1="750.62" x2="1436.95" y2="753.41"/><line x1="1435.00" y1="750.62" x2="1433.05" y2="753.41"/><line x1="1435.00" y1="736.00" x2="1449.72" y2="744.50"/><line x1="1442.36" y1="740.25" x2="1447.44" y2="739.81"/><line x1="1442.36" y1="740.25" x2="1444.52" y2="744.87"/><line x1="1447.66" y1="743.31" x2="1451.05" y2="743.01"/><line x1="1447.66" y1="743.31" x2="1449.10" y2="746.39"/><line x1="1435.00" y1="736.00" x2="1449.72" y2="727.50"/><line x1="1442.36" y1="731.75" x2="1444.52" y2="727.13"/><line x1="1442.36" y1="731.75" x2="1447.44" y2="732.19"/><line x1="1447.66" y1="728.69" x2="1449.10" y2="725.61"/><line x1="1447.66" y1="728.69" x2="1451.05" y2="728.99"/></g>
<path d="M1498.55 718.09 L1509.88 718.09 L1503.70 730.45 L1509.37 730.45 L1490.31 753.11 L1496.49 735.60 L1491.34 735.60 Z" fill="#ffffff"/>
<line x1="1548.5" y1="722.5" x2="1548.5" y2="753.5" stroke="#ffffff" stroke-width="1.8"/><path d="M1549.5 721.5 L1555.5 718.0 L1581.5 723.0 L1581.5 730.0 L1555.5 735.0 L1549.5 731.5 Z" fill="none" stroke="#ffffff" stroke-width="1.4"/><path d="M1555.5 718.0 L1562.5 719.5 L1562.5 733.5 L1555.5 735.0 Z" fill="#ffffff"/><path d="M1569.5 720.8 L1575.5 721.9 L1575.5 731.1 L1569.5 732.2 Z" fill="#ffffff"/>
<path d="M1643.45 719.13 L1643.40 729.03 A5.2 5.2 0 1 1 1635.27 724.70 Z" fill="#ffffff"/>
<path d="M1627.95 726.57 L1627.90 737.23 A5.6 5.6 0 1 1 1619.15 732.57 Z" fill="#ffffff"/>
<path d="M1638.85 737.37 L1638.80 748.03 A5.6 5.6 0 1 1 1630.05 743.37 Z" fill="#ffffff"/>
</svg>
<div class="note">* Yeşil renkli illerimizde Meteorolojik Uyarı olmadığından tabloda yer verilmemiştir.</div>
<div class="row" style="left:48px;top:865.4px;width:715.5px;height:69.2px"></div>
<div class="nm" style="left:62.5px;top:887.0px;line-height:26px">Ağrı</div>
<div class="yb" style="left:766.5px;top:865.4px;width:69.2px;height:69.2px"></div>
<div class="row" style="left:863.8px;top:865.4px;width:645.9px;height:69.2px"></div>
<div class="nm" style="left:877.5px;top:887.0px;line-height:26px">Artvin</div>
<div class="yb" style="left:1512.1px;top:865.4px;width:67.1px;height:69.2px"></div>
<div class="yb" style="left:1582px;top:865.4px;width:66.7px;height:69.2px"></div>
<div class="row" style="left:48px;top:941.4px;width:715.5px;height:70.9px"></div>
<div class="nm" style="left:62.5px;top:963.8px;line-height:26px">Bingöl</div>
<div class="yb" style="left:766.5px;top:941.4px;width:69.2px;height:70.9px"></div>
<div class="row" style="left:863.8px;top:941.4px;width:715.2px;height:70.9px"></div>
<div class="nm" style="left:877.5px;top:963.8px;line-height:26px">Bitlis</div>
<div class="yb" style="left:1582px;top:941.4px;width:66.7px;height:70.9px"></div>
<div class="row" style="left:48px;top:1019.1px;width:715.5px;height:69.0px"></div>
<div class="nm" style="left:62.5px;top:1040.6px;line-height:26px">Elazığ</div>
<div class="yb" style="left:766.5px;top:1019.1px;width:69.2px;height:69.0px"></div>
<div class="row" style="left:863.8px;top:1019.1px;width:715.2px;height:69.0px"></div>
<div class="nm" style="left:877.5px;top:1040.6px;line-height:26px">Erzurum</div>
<div class="yb" style="left:1582px;top:1019.1px;width:66.7px;height:69.0px"></div>
<div class="row" style="left:48px;top:1097.3px;width:715.5px;height:69.1px"></div>
<div class="nm" style="left:62.5px;top:1118.8px;line-height:26px">Kars</div>
<div class="yb" style="left:766.5px;top:1097.3px;width:69.2px;height:69.1px"></div>
<div class="row" style="left:863.8px;top:1097.3px;width:715.2px;height:69.1px"></div>
<div class="nm" style="left:877.5px;top:1118.8px;line-height:26px">Kayseri</div>
<div class="yb" style="left:1582px;top:1097.3px;width:66.7px;height:69.1px"></div>
<div class="row" style="left:48px;top:1173.4px;width:715.5px;height:71.1px"></div>
<div class="nm" style="left:62.5px;top:1196.0px;line-height:26px">Kırşehir</div>
<div class="yb" style="left:766.5px;top:1173.4px;width:69.2px;height:71.1px"></div>
<div class="row" style="left:863.8px;top:1173.4px;width:715.2px;height:71.1px"></div>
<div class="nm" style="left:877.5px;top:1196.0px;line-height:26px">Muş</div>
<div class="yb" style="left:1582px;top:1173.4px;width:66.7px;height:71.1px"></div>
<div class="row" style="left:48px;top:1251.3px;width:715.5px;height:68.8px"></div>
<div class="nm" style="left:62.5px;top:1272.7px;line-height:26px">Niğde</div>
<div class="yb" style="left:766.5px;top:1251.3px;width:69.2px;height:68.8px"></div>
<div class="row" style="left:863.8px;top:1251.3px;width:645.9px;height:68.8px"></div>
<div class="nm" style="left:877.5px;top:1272.7px;line-height:26px">Rize</div>
<div class="yb" style="left:1512.1px;top:1251.3px;width:67.1px;height:68.8px"></div>
<div class="yb" style="left:1582px;top:1251.3px;width:66.7px;height:68.8px"></div>
<div class="row" style="left:48px;top:1329.3px;width:715.5px;height:68.9px"></div>
<div class="nm" style="left:62.5px;top:1350.8px;line-height:26px">Sivas</div>
<div class="yb" style="left:766.5px;top:1329.3px;width:69.2px;height:68.9px"></div>
<div class="row" style="left:863.8px;top:1329.3px;width:645.9px;height:68.9px"></div>
<div class="nm" style="left:877.5px;top:1350.8px;line-height:26px">Trabzon</div>
<div class="yb" style="left:1512.1px;top:1329.3px;width:67.1px;height:68.9px"></div>
<div class="yb" style="left:1582px;top:1329.3px;width:66.7px;height:68.9px"></div>
<div class="row" style="left:48px;top:1405.4px;width:715.5px;height:71.1px"></div>
<div class="nm" style="left:62.5px;top:1428.0px;line-height:26px">Van</div>
<div class="yb" style="left:766.5px;top:1405.4px;width:69.2px;height:71.1px"></div>
<div class="row" style="left:863.8px;top:1405.4px;width:715.2px;height:71.1px"></div>
<div class="nm" style="left:877.5px;top:1428.0px;line-height:26px">Yozgat</div>
<div class="yb" style="left:1582px;top:1405.4px;width:66.7px;height:71.1px"></div>
<svg width="1700" height="1494" style="position:absolute;left:0;top:0">
<path d="M812.95 883.81 L812.90 893.32 A5.0 5.0 0 1 1 805.08 889.17 Z" fill="#ffffff"/><path d="M797.25 890.95 L797.20 901.23 A5.4 5.4 0 1 1 788.76 896.74 Z" fill="#ffffff"/><path d="M808.25 901.65 L808.20 911.93 A5.4 5.4 0 1 1 799.76 907.44 Z" fill="#ffffff"/>
<path d="M1557.45 883.81 L1557.40 893.32 A5.0 5.0 0 1 1 1549.58 889.17 Z" fill="#ffffff"/><path d="M1541.75 890.95 L1541.70 901.23 A5.4 5.4 0 1 1 1533.26 896.74 Z" fill="#ffffff"/><path d="M1552.75 901.65 L1552.70 911.93 A5.4 5.4 0 1 1 1544.26 907.44 Z" fill="#ffffff"/>
<g stroke="#ffffff" stroke-width="1.8" stroke-linecap="round"><line x1="1615.30" y1="900.00" x2="1615.30" y2="884.50"/><line x1="1615.30" y1="892.25" x2="1612.63" y2="888.44"/><line x1="1615.30" y1="892.25" x2="1617.97" y2="888.44"/><line x1="1615.30" y1="886.67" x2="1613.52" y2="884.13"/><line x1="1615.30" y1="886.67" x2="1617.08" y2="884.13"/><line x1="1615.30" y1="900.00" x2="1601.88" y2="892.25"/><line x1="1608.59" y1="896.12" x2="1603.96" y2="896.53"/><line x1="1608.59" y1="896.12" x2="1606.62" y2="891.91"/><line x1="1603.76" y1="893.34" x2="1600.67" y2="893.61"/><line x1="1603.76" y1="893.34" x2="1602.45" y2="890.53"/><line x1="1615.30" y1="900.00" x2="1601.88" y2="907.75"/><line x1="1608.59" y1="903.88" x2="1606.62" y2="908.09"/><line x1="1608.59" y1="903.88" x2="1603.96" y2="903.47"/><line x1="1603.76" y1="906.66" x2="1602.45" y2="909.47"/><line x1="1603.76" y1="906.66" x2="1600.67" y2="906.39"/><line x1="1615.30" y1="900.00" x2="1615.30" y2="915.50"/><line x1="1615.30" y1="907.75" x2="1617.97" y2="911.56"/><line x1="1615.30" y1="907.75" x2="1612.63" y2="911.56"/><line x1="1615.30" y1="913.33" x2="1617.08" y2="915.87"/><line x1="1615.30" y1="913.33" x2="1613.52" y2="915.87"/><line x1="1615.30" y1="900.00" x2="1628.72" y2="907.75"/><line x1="1622.01" y1="903.88" x2="1626.64" y2="903.47"/><line x1="1622.01" y1="903.88" x2="1623.98" y2="908.09"/><line x1="1626.84" y1="906.66" x2="1629.93" y2="906.39"/><line x1="1626.84" y1="906.66" x2="1628.15" y2="909.47"/><line x1="1615.30" y1="900.00" x2="1628.72" y2="892.25"/><line x1="1622.01" y1="896.12" x2="1623.98" y2="891.91"/><line x1="1622.01" y1="896.12" x2="1626.64" y2="896.53"/><line x1="1626.84" y1="893.34" x2="1628.15" y2="890.53"/><line x1="1626.84" y1="893.34" x2="1629.93" y2="893.61"/></g>
<path d="M799.60 959.85 L810.60 959.85 L804.60 971.85 L810.10 971.85 L791.60 993.85 L797.60 976.85 L792.60 976.85 Z" fill="#ffffff"/>
<path d="M1613.80 959.85 L1624.80 959.85 L1618.80 971.85 L1624.30 971.85 L1605.80 993.85 L1611.80 976.85 L1606.80 976.85 Z" fill="#ffffff"/>
<path d="M799.60 1036.60 L810.60 1036.60 L804.60 1048.60 L810.10 1048.60 L791.60 1070.60 L797.60 1053.60 L792.60 1053.60 Z" fill="#ffffff"/>
<path d="M1627.15 1037.41 L1627.10 1046.92 A5.0 5.0 0 1 1 1619.28 1042.77 Z" fill="#ffffff"/><path d="M1611.45 1044.55 L1611.40 1054.83 A5.4 5.4 0 1 1 1602.96 1050.34 Z" fill="#ffffff"/><path d="M1622.45 1055.25 L1622.40 1065.53 A5.4 5.4 0 1 1 1613.96 1061.04 Z" fill="#ffffff"/>
<path d="M812.95 1115.66 L812.90 1125.17 A5.0 5.0 0 1 1 805.08 1121.02 Z" fill="#ffffff"/><path d="M797.25 1122.80 L797.20 1133.08 A5.4 5.4 0 1 1 788.76 1128.59 Z" fill="#ffffff"/><path d="M808.25 1133.50 L808.20 1143.78 A5.4 5.4 0 1 1 799.76 1139.29 Z" fill="#ffffff"/>
<g stroke="#fbfbc4" stroke-width="1.2" stroke-linecap="round"><line x1="1608.20" y1="1123.28" x2="1608.20" y2="1115.20"/><line x1="1608.20" y1="1117.62" x2="1606.81" y2="1115.64"/><line x1="1608.20" y1="1117.62" x2="1609.59" y2="1115.64"/><line x1="1608.20" y1="1123.28" x2="1601.21" y2="1119.24"/><line x1="1603.30" y1="1120.45" x2="1600.89" y2="1120.66"/><line x1="1603.30" y1="1120.45" x2="1602.28" y2="1118.25"/><line x1="1608.20" y1="1123.28" x2="1601.21" y2="1127.31"/><line x1="1603.30" y1="1126.10" x2="1602.28" y2="1128.30"/><line x1="1603.30" y1="1126.10" x2="1600.89" y2="1125.89"/><line x1="1608.20" y1="1123.28" x2="1608.20" y2="1131.35"/><line x1="1608.20" y1="1128.93" x2="1609.59" y2="1130.91"/><line x1="1608.20" y1="1128.93" x2="1606.81" y2="1130.91"/><line x1="1608.20" y1="1123.28" x2="1615.19" y2="1127.31"/><line x1="1613.10" y1="1126.10" x2="1615.51" y2="1125.89"/><line x1="1613.10" y1="1126.10" x2="1614.12" y2="1128.30"/><line x1="1608.20" y1="1123.28" x2="1615.19" y2="1119.24"/><line x1="1613.10" y1="1120.45" x2="1614.12" y2="1118.25"/><line x1="1613.10" y1="1120.45" x2="1615.51" y2="1120.66"/></g><g stroke="#fbfbc4" stroke-width="1.2" stroke-linecap="round"><line x1="1625.30" y1="1121.38" x2="1625.30" y2="1116.15"/><line x1="1625.30" y1="1117.72" x2="1624.40" y2="1116.43"/><line x1="1625.30" y1="1117.72" x2="1626.20" y2="1116.43"/><line x1="1625.30" y1="1121.38" x2="1620.78" y2="1118.76"/><line x1="1622.13" y1="1119.55" x2="1620.57" y2="1119.68"/><line x1="1622.13" y1="1119.55" x2="1621.47" y2="1118.13"/><line x1="1625.30" y1="1121.38" x2="1620.78" y2="1123.99"/><line x1="1622.13" y1="1123.20" x2="1621.47" y2="1124.62"/><line x1="1622.13" y1="1123.20" x2="1620.57" y2="1123.07"/><line x1="1625.30" y1="1121.38" x2="1625.30" y2="1126.60"/><line x1="1625.30" y1="1125.03" x2="1626.20" y2="1126.32"/><line x1="1625.30" y1="1125.03" x2="1624.40" y2="1126.32"/><line x1="1625.30" y1="1121.38" x2="1629.82" y2="1123.99"/><line x1="1628.47" y1="1123.20" x2="1630.03" y2="1123.07"/><line x1="1628.47" y1="1123.20" x2="1629.13" y2="1124.62"/><line x1="1625.30" y1="1121.38" x2="1629.82" y2="1118.76"/><line x1="1628.47" y1="1119.55" x2="1629.13" y2="1118.13"/><line x1="1628.47" y1="1119.55" x2="1630.03" y2="1119.68"/></g><g fill="none" stroke="#fbfbc4" stroke-width="1.5" stroke-linejoin="round"><path d="M1599.46 1136.1 Q1612.0 1131.35 1632.425 1132.775 L1632.425 1147.5 L1599.46 1147.5 Z"/><path d="M1602.5 1143.7 Q1615.8 1135.15 1629.1000000000001 1136.575"/><path d="M1610.1000000000001 1145.6 Q1621.5 1139.9 1630.05 1141.325"/></g>
<g stroke="#fbfbc4" stroke-width="1.2" stroke-linecap="round"><line x1="794.00" y1="1200.38" x2="794.00" y2="1192.30"/><line x1="794.00" y1="1194.72" x2="792.61" y2="1192.74"/><line x1="794.00" y1="1194.72" x2="795.39" y2="1192.74"/><line x1="794.00" y1="1200.38" x2="787.01" y2="1196.34"/><line x1="789.10" y1="1197.55" x2="786.69" y2="1197.76"/><line x1="789.10" y1="1197.55" x2="788.08" y2="1195.35"/><line x1="794.00" y1="1200.38" x2="787.01" y2="1204.41"/><line x1="789.10" y1="1203.20" x2="788.08" y2="1205.40"/><line x1="789.10" y1="1203.20" x2="786.69" y2="1202.99"/><line x1="794.00" y1="1200.38" x2="794.00" y2="1208.45"/><line x1="794.00" y1="1206.03" x2="795.39" y2="1208.01"/><line x1="794.00" y1="1206.03" x2="792.61" y2="1208.01"/><line x1="794.00" y1="1200.38" x2="800.99" y2="1204.41"/><line x1="798.90" y1="1203.20" x2="801.31" y2="1202.99"/><line x1="798.90" y1="1203.20" x2="799.92" y2="1205.40"/><line x1="794.00" y1="1200.38" x2="800.99" y2="1196.34"/><line x1="798.90" y1="1197.55" x2="799.92" y2="1195.35"/><line x1="798.90" y1="1197.55" x2="801.31" y2="1197.76"/></g><g stroke="#fbfbc4" stroke-width="1.2" stroke-linecap="round"><line x1="811.10" y1="1198.48" x2="811.10" y2="1193.25"/><line x1="811.10" y1="1194.82" x2="810.20" y2="1193.53"/><line x1="811.10" y1="1194.82" x2="812.00" y2="1193.53"/><line x1="811.10" y1="1198.48" x2="806.58" y2="1195.86"/><line x1="807.93" y1="1196.65" x2="806.37" y2="1196.78"/><line x1="807.93" y1="1196.65" x2="807.27" y2="1195.23"/><line x1="811.10" y1="1198.48" x2="806.58" y2="1201.09"/><line x1="807.93" y1="1200.30" x2="807.27" y2="1201.72"/><line x1="807.93" y1="1200.30" x2="806.37" y2="1200.17"/><line x1="811.10" y1="1198.48" x2="811.10" y2="1203.70"/><line x1="811.10" y1="1202.13" x2="812.00" y2="1203.42"/><line x1="811.10" y1="1202.13" x2="810.20" y2="1203.42"/><line x1="811.10" y1="1198.48" x2="815.62" y2="1201.09"/><line x1="814.27" y1="1200.30" x2="815.83" y2="1200.17"/><line x1="814.27" y1="1200.30" x2="814.93" y2="1201.72"/><line x1="811.10" y1="1198.48" x2="815.62" y2="1195.86"/><line x1="814.27" y1="1196.65" x2="814.93" y2="1195.23"/><line x1="814.27" y1="1196.65" x2="815.83" y2="1196.78"/></g><g fill="none" stroke="#fbfbc4" stroke-width="1.5" stroke-linejoin="round"><path d="M785.26 1213.2 Q797.8 1208.45 818.225 1209.8750000000002 L818.225 1224.6000000000001 L785.26 1224.6000000000001 Z"/><path d="M788.3 1220.8000000000002 Q801.6 1212.2500000000002 814.9 1213.6750000000002"/><path d="M795.9 1222.7 Q807.3 1217.0000000000002 815.85 1218.4250000000002"/></g>
<path d="M1613.80 1191.95 L1624.80 1191.95 L1618.80 1203.95 L1624.30 1203.95 L1605.80 1225.95 L1611.80 1208.95 L1606.80 1208.95 Z" fill="#ffffff"/>
<g stroke="#fbfbc4" stroke-width="1.2" stroke-linecap="round"><line x1="794.00" y1="1277.12" x2="794.00" y2="1269.05"/><line x1="794.00" y1="1271.47" x2="792.61" y2="1269.49"/><line x1="794.00" y1="1271.47" x2="795.39" y2="1269.49"/><line x1="794.00" y1="1277.12" x2="787.01" y2="1273.09"/><line x1="789.10" y1="1274.30" x2="786.69" y2="1274.51"/><line x1="789.10" y1="1274.30" x2="788.08" y2="1272.10"/><line x1="794.00" y1="1277.12" x2="787.01" y2="1281.16"/><line x1="789.10" y1="1279.95" x2="788.08" y2="1282.15"/><line x1="789.10" y1="1279.95" x2="786.69" y2="1279.74"/><line x1="794.00" y1="1277.12" x2="794.00" y2="1285.20"/><line x1="794.00" y1="1282.78" x2="795.39" y2="1284.76"/><line x1="794.00" y1="1282.78" x2="792.61" y2="1284.76"/><line x1="794.00" y1="1277.12" x2="800.99" y2="1281.16"/><line x1="798.90" y1="1279.95" x2="801.31" y2="1279.74"/><line x1="798.90" y1="1279.95" x2="799.92" y2="1282.15"/><line x1="794.00" y1="1277.12" x2="800.99" y2="1273.09"/><line x1="798.90" y1="1274.30" x2="799.92" y2="1272.10"/><line x1="798.90" y1="1274.30" x2="801.31" y2="1274.51"/></g><g stroke="#fbfbc4" stroke-width="1.2" stroke-linecap="round"><line x1="811.10" y1="1275.22" x2="811.10" y2="1270.00"/><line x1="811.10" y1="1271.57" x2="810.20" y2="1270.28"/><line x1="811.10" y1="1271.57" x2="812.00" y2="1270.28"/><line x1="811.10" y1="1275.22" x2="806.58" y2="1272.61"/><line x1="807.93" y1="1273.40" x2="806.37" y2="1273.53"/><line x1="807.93" y1="1273.40" x2="807.27" y2="1271.98"/><line x1="811.10" y1="1275.22" x2="806.58" y2="1277.84"/><line x1="807.93" y1="1277.05" x2="807.27" y2="1278.47"/><line x1="807.93" y1="1277.05" x2="806.37" y2="1276.92"/><line x1="811.10" y1="1275.22" x2="811.10" y2="1280.45"/><line x1="811.10" y1="1278.88" x2="812.00" y2="1280.17"/><line x1="811.10" y1="1278.88" x2="810.20" y2="1280.17"/><line x1="811.10" y1="1275.22" x2="815.62" y2="1277.84"/><line x1="814.27" y1="1277.05" x2="815.83" y2="1276.92"/><line x1="814.27" y1="1277.05" x2="814.93" y2="1278.47"/><line x1="811.10" y1="1275.22" x2="815.62" y2="1272.61"/><line x1="814.27" y1="1273.40" x2="814.93" y2="1271.98"/><line x1="814.27" y1="1273.40" x2="815.83" y2="1273.53"/></g><g fill="none" stroke="#fbfbc4" stroke-width="1.5" stroke-linejoin="round"><path d="M785.26 1289.9499999999998 Q797.8 1285.1999999999998 818.225 1286.625 L818.225 1301.35 L785.26 1301.35 Z"/><path d="M788.3 1297.55 Q801.6 1289.0 814.9 1290.425"/><path d="M795.9 1299.4499999999998 Q807.3 1293.75 815.85 1295.175"/></g>
<path d="M1557.45 1269.51 L1557.40 1279.02 A5.0 5.0 0 1 1 1549.58 1274.87 Z" fill="#ffffff"/><path d="M1541.75 1276.65 L1541.70 1286.93 A5.4 5.4 0 1 1 1533.26 1282.44 Z" fill="#ffffff"/><path d="M1552.75 1287.35 L1552.70 1297.63 A5.4 5.4 0 1 1 1544.26 1293.14 Z" fill="#ffffff"/>
<g stroke="#ffffff" stroke-width="1.8" stroke-linecap="round"><line x1="1615.30" y1="1285.70" x2="1615.30" y2="1270.20"/><line x1="1615.30" y1="1277.95" x2="1612.63" y2="1274.14"/><line x1="1615.30" y1="1277.95" x2="1617.97" y2="1274.14"/><line x1="1615.30" y1="1272.37" x2="1613.52" y2="1269.83"/><line x1="1615.30" y1="1272.37" x2="1617.08" y2="1269.83"/><line x1="1615.30" y1="1285.70" x2="1601.88" y2="1277.95"/><line x1="1608.59" y1="1281.82" x2="1603.96" y2="1282.23"/><line x1="1608.59" y1="1281.82" x2="1606.62" y2="1277.61"/><line x1="1603.76" y1="1279.03" x2="1600.67" y2="1279.31"/><line x1="1603.76" y1="1279.03" x2="1602.45" y2="1276.23"/><line x1="1615.30" y1="1285.70" x2="1601.88" y2="1293.45"/><line x1="1608.59" y1="1289.57" x2="1606.62" y2="1293.79"/><line x1="1608.59" y1="1289.57" x2="1603.96" y2="1289.17"/><line x1="1603.76" y1="1292.36" x2="1602.45" y2="1295.17"/><line x1="1603.76" y1="1292.36" x2="1600.67" y2="1292.09"/><line x1="1615.30" y1="1285.70" x2="1615.30" y2="1301.20"/><line x1="1615.30" y1="1293.45" x2="1617.97" y2="1297.26"/><line x1="1615.30" y1="1293.45" x2="1612.63" y2="1297.26"/><line x1="1615.30" y1="1299.03" x2="1617.08" y2="1301.57"/><line x1="1615.30" y1="1299.03" x2="1613.52" y2="1301.57"/><line x1="1615.30" y1="1285.70" x2="1628.72" y2="1293.45"/><line x1="1622.01" y1="1289.57" x2="1626.64" y2="1289.17"/><line x1="1622.01" y1="1289.57" x2="1623.98" y2="1293.79"/><line x1="1626.84" y1="1292.36" x2="1629.93" y2="1292.09"/><line x1="1626.84" y1="1292.36" x2="1628.15" y2="1295.17"/><line x1="1615.30" y1="1285.70" x2="1628.72" y2="1277.95"/><line x1="1622.01" y1="1281.82" x2="1623.98" y2="1277.61"/><line x1="1622.01" y1="1281.82" x2="1626.64" y2="1282.23"/><line x1="1626.84" y1="1279.03" x2="1628.15" y2="1276.23"/><line x1="1626.84" y1="1279.03" x2="1629.93" y2="1279.31"/></g>
<g stroke="#fbfbc4" stroke-width="1.2" stroke-linecap="round"><line x1="794.00" y1="1355.18" x2="794.00" y2="1347.10"/><line x1="794.00" y1="1349.52" x2="792.61" y2="1347.54"/><line x1="794.00" y1="1349.52" x2="795.39" y2="1347.54"/><line x1="794.00" y1="1355.18" x2="787.01" y2="1351.14"/><line x1="789.10" y1="1352.35" x2="786.69" y2="1352.56"/><line x1="789.10" y1="1352.35" x2="788.08" y2="1350.15"/><line x1="794.00" y1="1355.18" x2="787.01" y2="1359.21"/><line x1="789.10" y1="1358.00" x2="788.08" y2="1360.20"/><line x1="789.10" y1="1358.00" x2="786.69" y2="1357.79"/><line x1="794.00" y1="1355.18" x2="794.00" y2="1363.25"/><line x1="794.00" y1="1360.83" x2="795.39" y2="1362.81"/><line x1="794.00" y1="1360.83" x2="792.61" y2="1362.81"/><line x1="794.00" y1="1355.18" x2="800.99" y2="1359.21"/><line x1="798.90" y1="1358.00" x2="801.31" y2="1357.79"/><line x1="798.90" y1="1358.00" x2="799.92" y2="1360.20"/><line x1="794.00" y1="1355.18" x2="800.99" y2="1351.14"/><line x1="798.90" y1="1352.35" x2="799.92" y2="1350.15"/><line x1="798.90" y1="1352.35" x2="801.31" y2="1352.56"/></g><g stroke="#fbfbc4" stroke-width="1.2" stroke-linecap="round"><line x1="811.10" y1="1353.28" x2="811.10" y2="1348.05"/><line x1="811.10" y1="1349.62" x2="810.20" y2="1348.33"/><line x1="811.10" y1="1349.62" x2="812.00" y2="1348.33"/><line x1="811.10" y1="1353.28" x2="806.58" y2="1350.66"/><line x1="807.93" y1="1351.45" x2="806.37" y2="1351.58"/><line x1="807.93" y1="1351.45" x2="807.27" y2="1350.03"/><line x1="811.10" y1="1353.28" x2="806.58" y2="1355.89"/><line x1="807.93" y1="1355.10" x2="807.27" y2="1356.52"/><line x1="807.93" y1="1355.10" x2="806.37" y2="1354.97"/><line x1="811.10" y1="1353.28" x2="811.10" y2="1358.50"/><line x1="811.10" y1="1356.93" x2="812.00" y2="1358.22"/><line x1="811.10" y1="1356.93" x2="810.20" y2="1358.22"/><line x1="811.10" y1="1353.28" x2="815.62" y2="1355.89"/><line x1="814.27" y1="1355.10" x2="815.83" y2="1354.97"/><line x1="814.27" y1="1355.10" x2="814.93" y2="1356.52"/><line x1="811.10" y1="1353.28" x2="815.62" y2="1350.66"/><line x1="814.27" y1="1351.45" x2="814.93" y2="1350.03"/><line x1="814.27" y1="1351.45" x2="815.83" y2="1351.58"/></g><g fill="none" stroke="#fbfbc4" stroke-width="1.5" stroke-linejoin="round"><path d="M785.26 1368.0 Q797.8 1363.25 818.225 1364.6750000000002 L818.225 1379.4 L785.26 1379.4 Z"/><path d="M788.3 1375.6000000000001 Q801.6 1367.0500000000002 814.9 1368.4750000000001"/><path d="M795.9 1377.5 Q807.3 1371.8000000000002 815.85 1373.2250000000001"/></g>
<path d="M1557.45 1347.56 L1557.40 1357.07 A5.0 5.0 0 1 1 1549.58 1352.92 Z" fill="#ffffff"/><path d="M1541.75 1354.70 L1541.70 1364.98 A5.4 5.4 0 1 1 1533.26 1360.49 Z" fill="#ffffff"/><path d="M1552.75 1365.40 L1552.70 1375.68 A5.4 5.4 0 1 1 1544.26 1371.19 Z" fill="#ffffff"/>
<g stroke="#ffffff" stroke-width="1.8" stroke-linecap="round"><line x1="1615.30" y1="1363.75" x2="1615.30" y2="1348.25"/><line x1="1615.30" y1="1356.00" x2="1612.63" y2="1352.19"/><line x1="1615.30" y1="1356.00" x2="1617.97" y2="1352.19"/><line x1="1615.30" y1="1350.42" x2="1613.52" y2="1347.88"/><line x1="1615.30" y1="1350.42" x2="1617.08" y2="1347.88"/><line x1="1615.30" y1="1363.75" x2="1601.88" y2="1356.00"/><line x1="1608.59" y1="1359.88" x2="1603.96" y2="1360.28"/><line x1="1608.59" y1="1359.88" x2="1606.62" y2="1355.66"/><line x1="1603.76" y1="1357.09" x2="1600.67" y2="1357.36"/><line x1="1603.76" y1="1357.09" x2="1602.45" y2="1354.28"/><line x1="1615.30" y1="1363.75" x2="1601.88" y2="1371.50"/><line x1="1608.59" y1="1367.62" x2="1606.62" y2="1371.84"/><line x1="1608.59" y1="1367.62" x2="1603.96" y2="1367.22"/><line x1="1603.76" y1="1370.41" x2="1602.45" y2="1373.22"/><line x1="1603.76" y1="1370.41" x2="1600.67" y2="1370.14"/><line x1="1615.30" y1="1363.75" x2="1615.30" y2="1379.25"/><line x1="1615.30" y1="1371.50" x2="1617.97" y2="1375.31"/><line x1="1615.30" y1="1371.50" x2="1612.63" y2="1375.31"/><line x1="1615.30" y1="1377.08" x2="1617.08" y2="1379.62"/><line x1="1615.30" y1="1377.08" x2="1613.52" y2="1379.62"/><line x1="1615.30" y1="1363.75" x2="1628.72" y2="1371.50"/><line x1="1622.01" y1="1367.62" x2="1626.64" y2="1367.22"/><line x1="1622.01" y1="1367.62" x2="1623.98" y2="1371.84"/><line x1="1626.84" y1="1370.41" x2="1629.93" y2="1370.14"/><line x1="1626.84" y1="1370.41" x2="1628.15" y2="1373.22"/><line x1="1615.30" y1="1363.75" x2="1628.72" y2="1356.00"/><line x1="1622.01" y1="1359.88" x2="1623.98" y2="1355.66"/><line x1="1622.01" y1="1359.88" x2="1626.64" y2="1360.28"/><line x1="1626.84" y1="1357.09" x2="1628.15" y2="1354.28"/><line x1="1626.84" y1="1357.09" x2="1629.93" y2="1357.36"/></g>
<path d="M812.95 1424.76 L812.90 1434.27 A5.0 5.0 0 1 1 805.08 1430.12 Z" fill="#ffffff"/><path d="M797.25 1431.90 L797.20 1442.18 A5.4 5.4 0 1 1 788.76 1437.69 Z" fill="#ffffff"/><path d="M808.25 1442.60 L808.20 1452.88 A5.4 5.4 0 1 1 799.76 1448.39 Z" fill="#ffffff"/>
<g stroke="#fbfbc4" stroke-width="1.2" stroke-linecap="round"><line x1="1608.20" y1="1432.38" x2="1608.20" y2="1424.30"/><line x1="1608.20" y1="1426.72" x2="1606.81" y2="1424.74"/><line x1="1608.20" y1="1426.72" x2="1609.59" y2="1424.74"/><line x1="1608.20" y1="1432.38" x2="1601.21" y2="1428.34"/><line x1="1603.30" y1="1429.55" x2="1600.89" y2="1429.76"/><line x1="1603.30" y1="1429.55" x2="1602.28" y2="1427.35"/><line x1="1608.20" y1="1432.38" x2="1601.21" y2="1436.41"/><line x1="1603.30" y1="1435.20" x2="1602.28" y2="1437.40"/><line x1="1603.30" y1="1435.20" x2="1600.89" y2="1434.99"/><line x1="1608.20" y1="1432.38" x2="1608.20" y2="1440.45"/><line x1="1608.20" y1="1438.03" x2="1609.59" y2="1440.01"/><line x1="1608.20" y1="1438.03" x2="1606.81" y2="1440.01"/><line x1="1608.20" y1="1432.38" x2="1615.19" y2="1436.41"/><line x1="1613.10" y1="1435.20" x2="1615.51" y2="1434.99"/><line x1="1613.10" y1="1435.20" x2="1614.12" y2="1437.40"/><line x1="1608.20" y1="1432.38" x2="1615.19" y2="1428.34"/><line x1="1613.10" y1="1429.55" x2="1614.12" y2="1427.35"/><line x1="1613.10" y1="1429.55" x2="1615.51" y2="1429.76"/></g><g stroke="#fbfbc4" stroke-width="1.2" stroke-linecap="round"><line x1="1625.30" y1="1430.48" x2="1625.30" y2="1425.25"/><line x1="1625.30" y1="1426.82" x2="1624.40" y2="1425.53"/><line x1="1625.30" y1="1426.82" x2="1626.20" y2="1425.53"/><line x1="1625.30" y1="1430.48" x2="1620.78" y2="1427.86"/><line x1="1622.13" y1="1428.65" x2="1620.57" y2="1428.78"/><line x1="1622.13" y1="1428.65" x2="1621.47" y2="1427.23"/><line x1="1625.30" y1="1430.48" x2="1620.78" y2="1433.09"/><line x1="1622.13" y1="1432.30" x2="1621.47" y2="1433.72"/><line x1="1622.13" y1="1432.30" x2="1620.57" y2="1432.17"/><line x1="1625.30" y1="1430.48" x2="1625.30" y2="1435.70"/><line x1="1625.30" y1="1434.13" x2="1626.20" y2="1435.42"/><line x1="1625.30" y1="1434.13" x2="1624.40" y2="1435.42"/><line x1="1625.30" y1="1430.48" x2="1629.82" y2="1433.09"/><line x1="1628.47" y1="1432.30" x2="1630.03" y2="1432.17"/><line x1="1628.47" y1="1432.30" x2="1629.13" y2="1433.72"/><line x1="1625.30" y1="1430.48" x2="1629.82" y2="1427.86"/><line x1="1628.47" y1="1428.65" x2="1629.13" y2="1427.23"/><line x1="1628.47" y1="1428.65" x2="1630.03" y2="1428.78"/></g><g fill="none" stroke="#fbfbc4" stroke-width="1.5" stroke-linejoin="round"><path d="M1599.46 1445.2 Q1612.0 1440.45 1632.425 1441.8750000000002 L1632.425 1456.6000000000001 L1599.46 1456.6000000000001 Z"/><path d="M1602.5 1452.8000000000002 Q1615.8 1444.2500000000002 1629.1000000000001 1445.6750000000002"/><path d="M1610.1000000000001 1454.7 Q1621.5 1449.0000000000002 1630.05 1450.4250000000002"/></g>
</svg>
<div class="foot"></div>
</body>
</html>
